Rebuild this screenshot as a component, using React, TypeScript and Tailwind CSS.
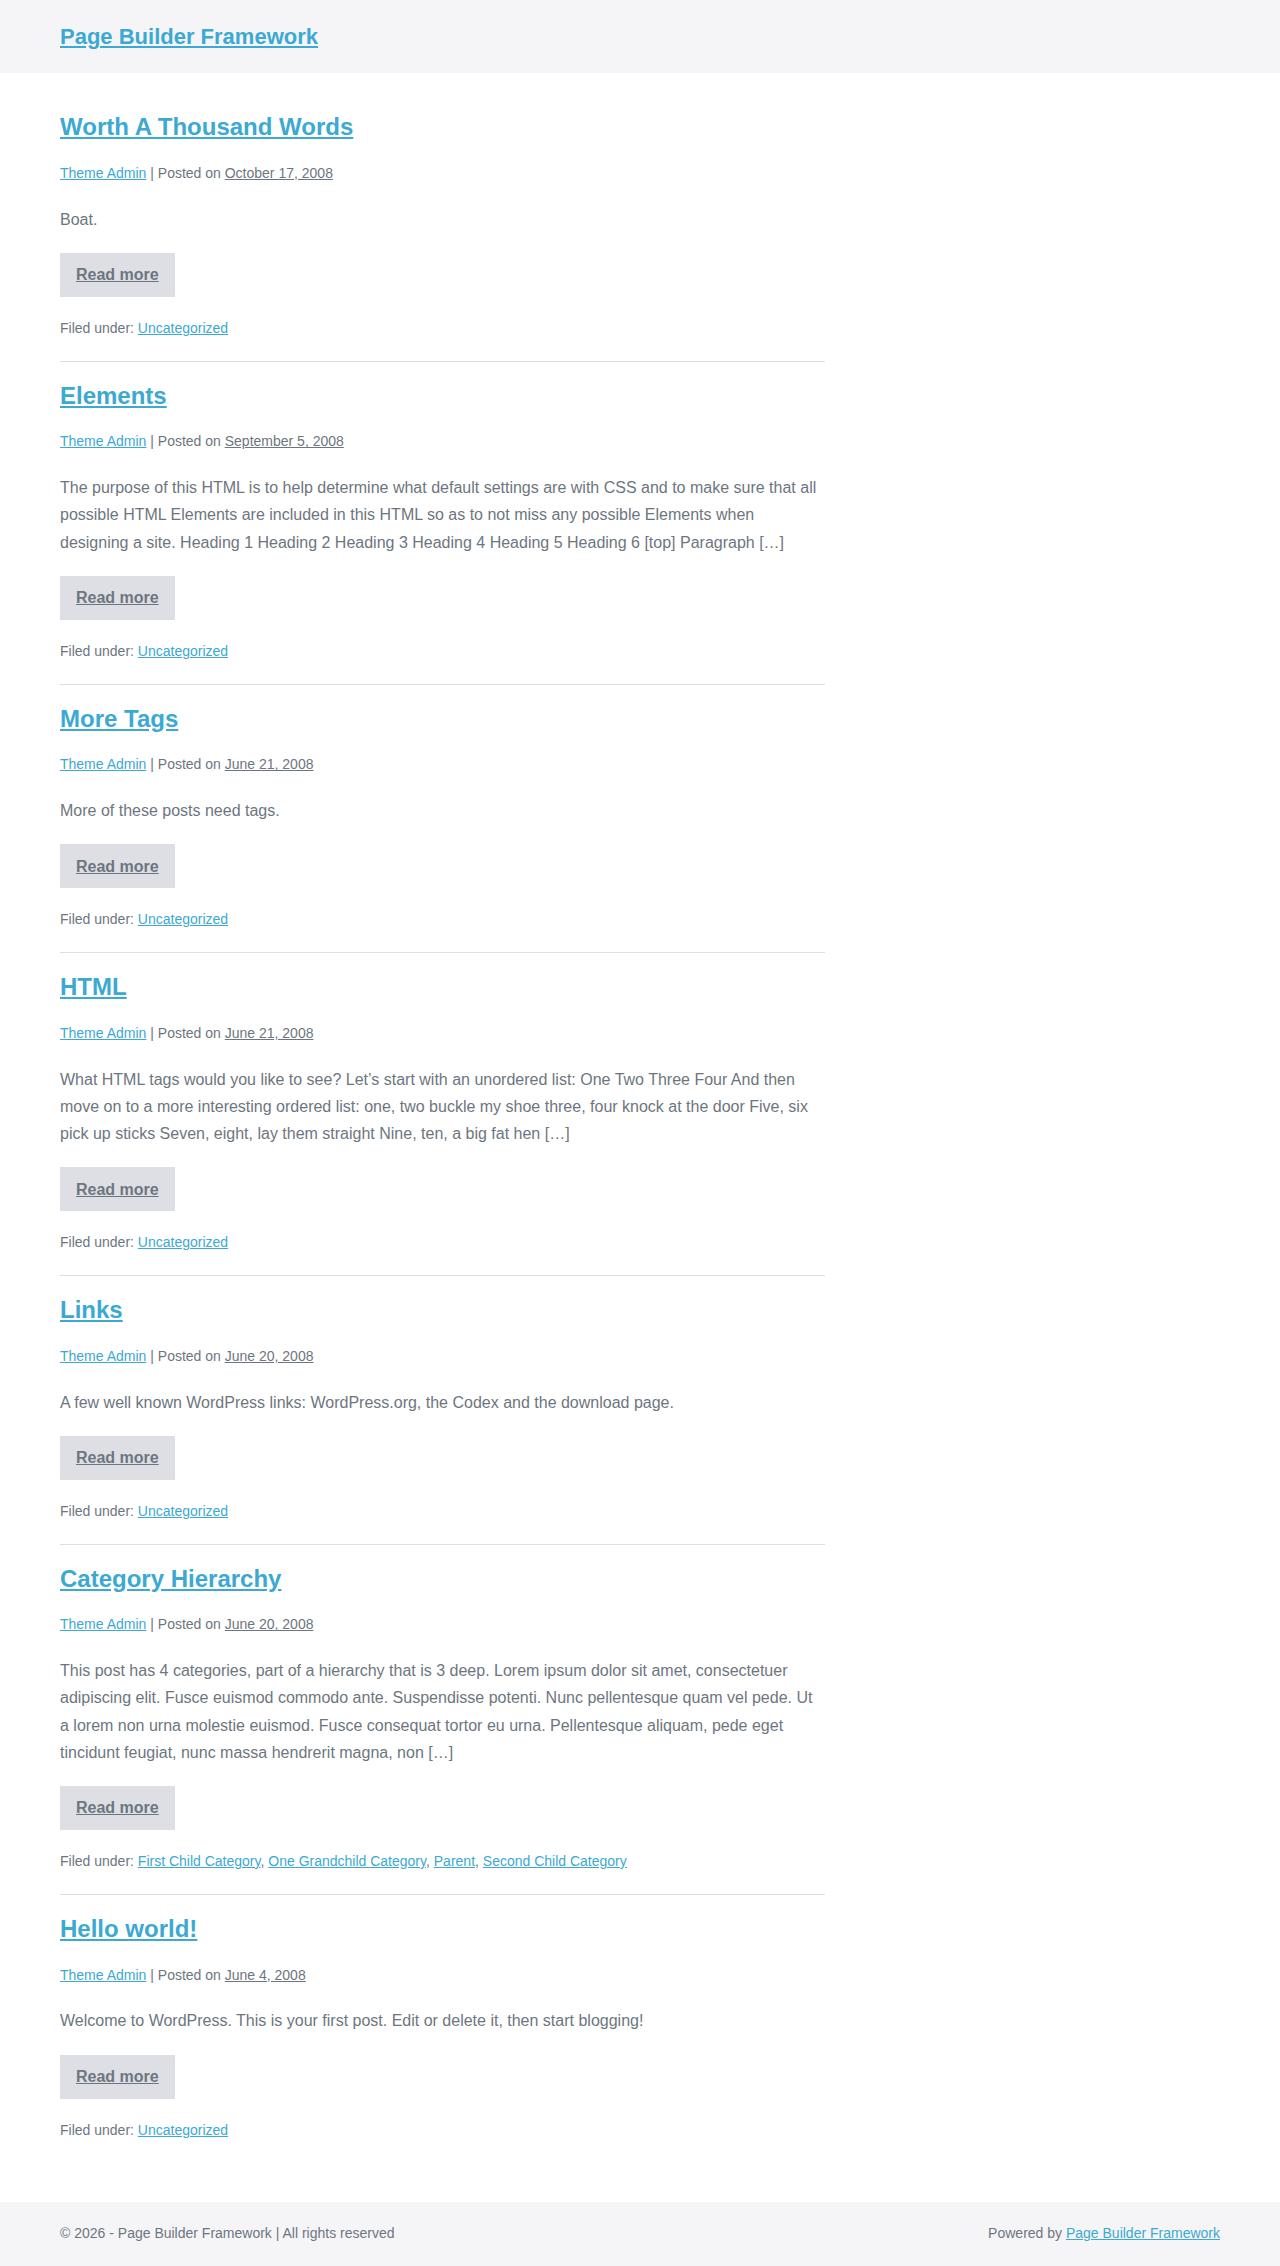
import React from "react";

type Post = {
  title: string;
  date: string;
  excerpt: string;
  cats: string[];
};

const posts: Post[] = [
  { title: "Worth A Thousand Words", date: "October 17, 2008", excerpt: "Boat.", cats: ["Uncategorized"] },
  {
    title: "Elements",
    date: "September 5, 2008",
    excerpt:
      "The purpose of this HTML is to help determine what default settings are with CSS and to make sure that all possible HTML Elements are included in this HTML so as to not miss any possible Elements when designing a site. Heading 1 Heading 2 Heading 3 Heading 4 Heading 5 Heading 6 [top] Paragraph […]",
    cats: ["Uncategorized"],
  },
  { title: "More Tags", date: "June 21, 2008", excerpt: "More of these posts need tags.", cats: ["Uncategorized"] },
  {
    title: "HTML",
    date: "June 21, 2008",
    excerpt:
      "What HTML tags would you like to see? Let’s start with an unordered list: One Two Three Four And then move on to a more interesting ordered list: one, two buckle my shoe three, four knock at the door Five, six pick up sticks Seven, eight, lay them straight Nine, ten, a big fat hen […]",
    cats: ["Uncategorized"],
  },
  {
    title: "Links",
    date: "June 20, 2008",
    excerpt: "A few well known WordPress links: WordPress.org, the Codex and the download page.",
    cats: ["Uncategorized"],
  },
  {
    title: "Category Hierarchy",
    date: "June 20, 2008",
    excerpt:
      "This post has 4 categories, part of a hierarchy that is 3 deep. Lorem ipsum dolor sit amet, consectetuer adipiscing elit. Fusce euismod commodo ante. Suspendisse potenti. Nunc pellentesque quam vel pede. Ut a lorem non urna molestie euismod. Fusce consequat tortor eu urna. Pellentesque aliquam, pede eget tincidunt feugiat, nunc massa hendrerit magna, non […]",
    cats: ["First Child Category", "One Grandchild Category", "Parent", "Second Child Category"],
  },
  {
    title: "Hello world!",
    date: "June 4, 2008",
    excerpt: "Welcome to WordPress. This is your first post. Edit or delete it, then start blogging!",
    cats: ["Uncategorized"],
  },
];

export default function App() {
  return (
    <div
      className="min-h-[2266px] flex flex-col bg-white text-[#6d7680] text-[16px] leading-[1.7]"
      style={{ fontFamily: '"Liberation Sans", Arial, Helvetica, sans-serif' }}
    >
      <header className="bg-[#f5f5f7] h-[73px] flex items-center">
        <div className="w-[1160px] mx-auto text-[22px] leading-[26px] pt-[1px]">
          <a href="#" className="font-bold text-[#3ba9d2] underline">
            Page Builder Framework
          </a>
        </div>
      </header>

      <main className="flex-1 pt-10 pb-10">
        <div className="w-[1160px] mx-auto">
          <div className="w-[765px]">
            {posts.map((p, i) => (
              <article
                key={p.title}
                className={
                  "flex flex-col gap-5 " +
                  (i === 0 ? "" : "pt-5 ") +
                  (i === posts.length - 1 ? "pb-5" : "pb-5 border-b border-[#dedee5]")
                }
              >
                <h2 className="text-[24px] font-bold leading-[1.2]">
                  <a href="#" className="text-[#3ba9d2] underline">
                    {p.title}
                  </a>
                </h2>
                <p className="text-[14px] leading-[1.7]">
                  <a href="#" className="text-[#3ba9d2] underline">
                    Theme Admin
                  </a>{" "}
                  | Posted on{" "}
                  <a href="#" className="underline">
                    {p.date}
                  </a>
                </p>
                <p className="text-[16px] leading-[1.7]">{p.excerpt}</p>
                <div>
                  <a
                    href="#"
                    className="inline-flex items-center h-[44px] px-4 bg-[#dedee5] text-[16px] font-bold text-[#6d7680] underline"
                  >
                    Read more
                  </a>
                </div>
                <p className="text-[14px] leading-[1.7]">
                  Filed under:{" "}
                  {p.cats.map((c, j) => (
                    <React.Fragment key={c}>
                      <a href="#" className="text-[#3ba9d2] underline">
                        {c}
                      </a>
                      {j < p.cats.length - 1 ? ", " : ""}
                    </React.Fragment>
                  ))}
                </p>
              </article>
            ))}
          </div>
        </div>
      </main>

      <footer className="bg-[#f5f5f7] h-[64px] flex items-center">
        <div className="w-[1160px] mx-auto flex justify-between text-[14px] leading-[1.7]">
          <span>© 2026 - Page Builder Framework | All rights reserved</span>
          <span>
            Powered by{" "}
            <a href="#" className="text-[#3ba9d2] underline">
              Page Builder Framework
            </a>
          </span>
        </div>
      </footer>
    </div>
  );
}
